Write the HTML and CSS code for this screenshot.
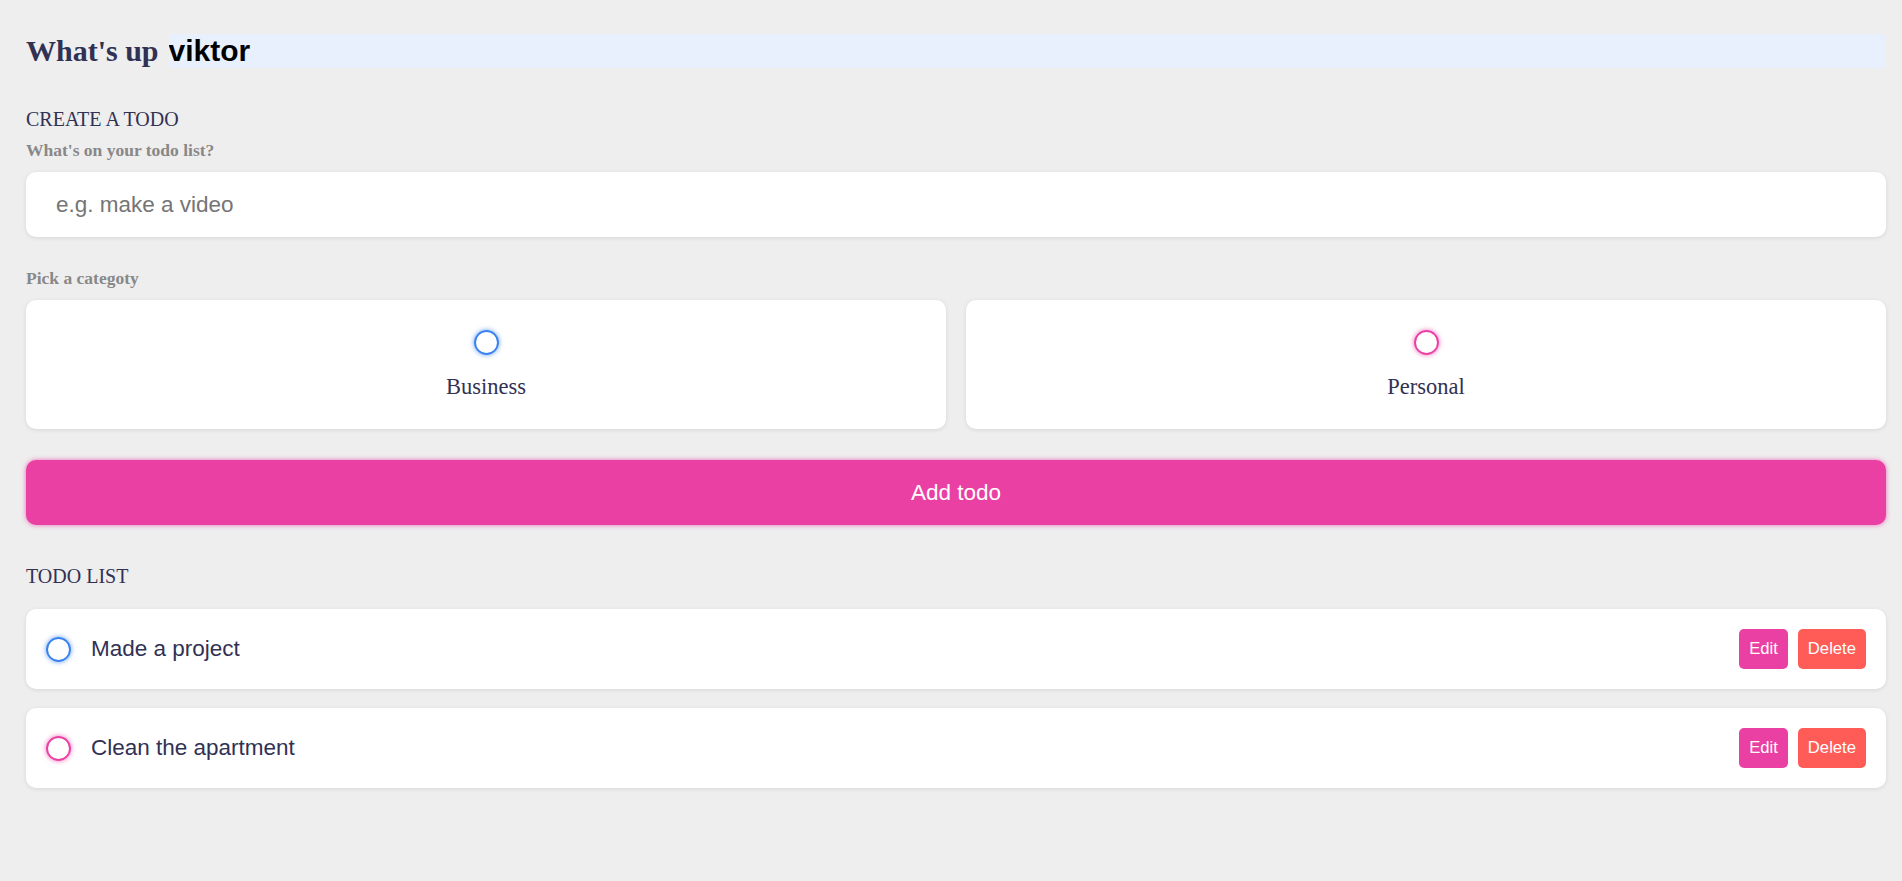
FILE: index.html
```html
<!DOCTYPE html>
<html lang="en">
<head>
  <meta charset="UTF-8" />
  <title>Todo</title>
  <link rel="stylesheet" href="styles.css">
</head>
<body>
<main class="app">

  <!-- GREETING -->
  <section class="greeting">
    <h2 class="title">What's up <input type="text" class="name-input" value="viktor" /></h2>
  </section>

  <!-- CREATE -->
  <section class="create-todo">
    <h3>CREATE A TODO</h3>
    <form>
      <h4>What's on your todo list?</h4>
      <input type="text" class="content-input" placeholder="e.g. make a video" />

      <h4>Pick a categoty</h4>
      <div class="options">
        <label>
          <input type="radio" name="category" value="business" />
          <span class="bubble business"></span>
          <div>Business</div>
        </label>
        <label>
          <input type="radio" name="category" value="personal" />
          <span class="bubble personal"></span>
          <div>Personal</div>
        </label>
      </div>

      <button type="button" class="add-btn">Add todo</button>
    </form>
  </section>

  <!-- LIST -->
  <section class="todo-list">
    <h3>TODO LIST</h3>
    <div class="list">
      <div class="todo-item">
        <label>
          <input type="checkbox" />
          <span class="bubble business"></span>
        </label>
        <div class="todo-content">
          <input type="text" value="Made a project" />
        </div>
        <div class="actions">
          <button class="edit">Edit</button>
          <button class="delete">Delete</button>
        </div>
      </div>
      <div class="todo-item">
        <label>
          <input type="checkbox" />
          <span class="bubble personal"></span>
        </label>
        <div class="todo-content">
          <input type="text" value="Clean the apartment" />
        </div>
        <div class="actions">
          <button class="edit">Edit</button>
          <button class="delete">Delete</button>
        </div>
      </div>
    </div>
  </section>

</main>
</body>
</html>
```

FILE: styles.css
```css
:root {
  --primary: #ea40a4;
  --business: #3a82ee;
  --personal: #ea40a4;
  --light: #eee;
  --grey: #888;
  --dark: #313154;
  --danger: #ff5b57;
  --shadow: 0 1px 4px rgba(0, 0, 0, 0.1);
  --business-glow: 0 0 5px rgba(58, 130, 238, 0.75);
  --personal-glow: 0 0 5px rgba(234, 64, 164, 0.75);
}
* {
  margin: 0;
  padding: 0;
  box-sizing: border-box;
  font-family: 'Liberation Serif', serif;
}
input, button {
  font-family: 'Liberation Sans', Arial, sans-serif;
  border: none;
  outline: none;
  background: none;
}
body {
  background: var(--light);
  color: var(--dark);
}
.app {
  padding: 34px 16px 40px 26px;
}
section {
  margin-bottom: 40px;
}
h3 {
  color: var(--dark);
  font-size: 20px;
  font-weight: 400;
  line-height: 23px;
}
h4 {
  color: var(--grey);
  font-size: 17.5px;
  font-weight: 700;
  line-height: 20px;
  margin-bottom: 12px;
}

/* greeting */
.greeting .title {
  display: flex;
  align-items: center;
  font-size: 30px;
  font-weight: 700;
  line-height: 34px;
  color: var(--dark);
}
.greeting .name-input {
  flex: 1 1 0%;
  min-width: 0;
  height: 34px;
  margin-left: 10px;
  font-size: 30px;
  font-weight: 700;
  color: #000;
  background-color: #e8f0fe;
}

/* create */
.create-todo h3 {
  margin-bottom: 9px;
}
.content-input {
  display: block;
  width: 100%;
  font-size: 22.5px;
  line-height: 25px;
  padding: 20px 30px;
  color: var(--dark);
  background-color: #fff;
  border-radius: 10px;
  box-shadow: var(--shadow);
  margin-bottom: 31px;
}
.content-input::placeholder {
  color: #757575;
}
.options {
  display: grid;
  grid-template-columns: repeat(2, 1fr);
  gap: 20px;
  margin-bottom: 31px;
}
.options label {
  display: flex;
  flex-direction: column;
  align-items: center;
  justify-content: center;
  background-color: #fff;
  padding: 30px;
  border-radius: 10px;
  box-shadow: var(--shadow);
  cursor: pointer;
}
.options label div {
  color: var(--dark);
  font-size: 22.5px;
  line-height: 24px;
  margin-top: 20px;
}
input[type="radio"], input[type="checkbox"] {
  display: none;
}
.bubble {
  display: block;
  width: 25px;
  height: 25px;
  border-radius: 999px;
  border: 2.5px solid var(--business);
  box-shadow: var(--business-glow);
}
.bubble.personal {
  border-color: var(--personal);
  box-shadow: var(--personal-glow);
}
.add-btn {
  display: block;
  width: 100%;
  font-size: 22.5px;
  line-height: 25px;
  padding: 20px 30px;
  color: #fff;
  background-color: var(--primary);
  box-shadow: var(--personal-glow);
  border-radius: 10px;
  cursor: pointer;
}

/* list */
.todo-list h3 {
  margin-bottom: 21px;
}
.todo-item {
  display: flex;
  align-items: center;
  background-color: #fff;
  padding: 20px;
  border-radius: 10px;
  box-shadow: var(--shadow);
  margin-bottom: 19px;
}
.todo-item label {
  display: block;
  margin-right: 20px;
  cursor: pointer;
}
.todo-content {
  flex: 1 1 0%;
}
.todo-content input {
  width: 100%;
  color: var(--dark);
  font-size: 22.5px;
}
.actions {
  display: flex;
  align-items: center;
}
.actions button {
  display: block;
  padding: 10px;
  font-size: 16.67px;
  line-height: 20px;
  border-radius: 5px;
  color: #fff;
  cursor: pointer;
}
.actions .edit {
  margin-right: 10px;
  background-color: var(--primary);
}
.actions .delete {
  background-color: var(--danger);
}
```
